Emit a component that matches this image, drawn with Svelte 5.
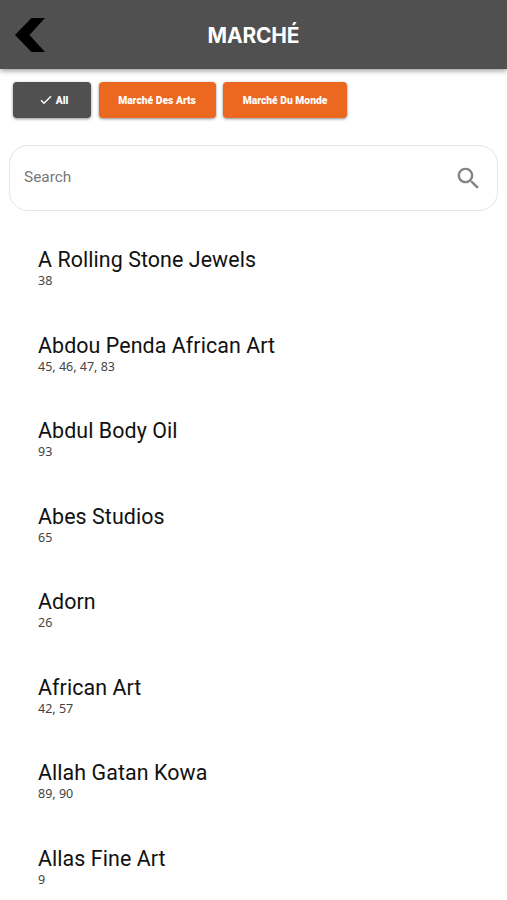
<script>
  const filters = [
    { label: 'All', width: 78, active: true },
    { label: 'Marché Des Arts', width: 117 },
    { label: 'Marché Du Monde', width: 124 }
  ];
  const vendors = [
    { name: 'A Rolling Stone Jewels', booths: '38' },
    { name: 'Abdou Penda African Art', booths: '45, 46, 47, 83' },
    { name: 'Abdul Body Oil', booths: '93' },
    { name: 'Abes Studios', booths: '65' },
    { name: 'Adorn', booths: '26' },
    { name: 'African Art', booths: '42, 57' },
    { name: 'Allah Gatan Kowa', booths: '89, 90' },
    { name: 'Allas Fine Art', booths: '9' }
  ];
</script>

<div class="page">
  <header>
    <button class="back" aria-label="Back">
      <svg width="30" height="34" viewBox="0 0 30 34"><path d="M16.5 0H30L14.5 17L30 34H16.5L0 17Z" fill="#000" /></svg>
    </button>
    <h1>MARCHÉ</h1>
  </header>

  <nav>
    {#each filters as f}
      <button class="chip" class:active={f.active} style="width: {f.width}px">
        {#if f.active}
          <svg width="12" height="10" viewBox="0 0 12 10"><path d="M1 5.2L4 8.2L11 1.2" fill="none" stroke="#fff" stroke-width="1.4" /></svg>
        {/if}
        <span>{f.label}</span>
      </button>
    {/each}
  </nav>

  <div class="search">
    <input type="text" placeholder="Search" />
    <svg width="29" height="29" viewBox="0 0 24 24"><path fill="#858585" d="M15.5 14h-.79l-.28-.27C15.41 12.59 16 11.11 16 9.5 16 5.91 13.09 3 9.5 3S3 5.91 3 9.5 5.91 16 9.5 16c1.61 0 3.09-.59 4.23-1.57l.27.28v.79l5 4.99L20.49 19l-4.99-5zm-6 0C7.01 14 5 11.99 5 9.5S7.01 5 9.5 5 14 7.01 14 9.5 11.99 14 9.5 14z" /></svg>
  </div>

  <ul>
    {#each vendors as v}
      <li>
        <span class="name">{v.name}</span>
        <span class="booths">{v.booths}</span>
      </li>
    {/each}
  </ul>
</div>

<style>
  :global(body) {
    margin: 0;
    background: #fff;
  }
  .page {
    height: 900px;
    overflow: hidden;
    background: #fff;
    font-family: Roboto, sans-serif;
  }
  button {
    border: 0;
    padding: 0;
    font-family: inherit;
  }
  header {
    display: grid;
    grid-template-columns: 60px 1fr 60px;
    align-items: center;
    height: 69px;
    background: #505050;
    box-shadow: 0 2px 5px rgba(0, 0, 0, 0.38);
  }
  .back {
    display: flex;
    justify-content: flex-start;
    padding: 0 0 0 15px;
    background: none;
  }
  h1 {
    margin: 2px 0 0;
    text-align: center;
    color: #fff;
    font: 700 21px/26px Inter, sans-serif;
    letter-spacing: -0.2px;
  }
  nav {
    display: flex;
    gap: 7.5px;
    padding: 13px 13px 0;
  }
  .chip {
    display: flex;
    align-items: center;
    justify-content: center;
    gap: 4px;
    height: 36px;
    border-radius: 4px;
    background: #ec6820;
    color: #fff;
    font-size: 10.3px;
    font-weight: 900;
    white-space: nowrap;
    box-shadow: 0 1px 3px rgba(0, 0, 0, 0.45);
  }
  .chip.active {
    box-sizing: border-box;
    padding-left: 4px;
    background: #505050;
  }
  .search {
    box-sizing: border-box;
    display: flex;
    align-items: center;
    height: 66px;
    margin: 27px 9px 0;
    padding: 0 14px;
    border: 1px solid #e5e5e5;
    border-radius: 19px;
  }
  input {
    flex: 1;
    min-width: 0;
    padding: 0 0 2px;
    border: 0;
    outline: 0;
    background: none;
    font: 15.4px Roboto, sans-serif;
  }
  input::placeholder {
    color: #777;
    opacity: 1;
  }
  ul {
    margin: 35px 0 0;
    padding: 0 38px;
    list-style: none;
  }
  li {
    display: flex;
    flex-direction: column;
    height: 85.5px;
  }
  .name {
    color: #111;
    font-size: 21.4px;
    line-height: 28px;
    letter-spacing: 0.08px;
    white-space: nowrap;
  }
  .booths {
    margin-top: -0.6px;
    color: #444;
    font: 12.5px/16px 'Noto Sans', sans-serif;
  }
</style>
